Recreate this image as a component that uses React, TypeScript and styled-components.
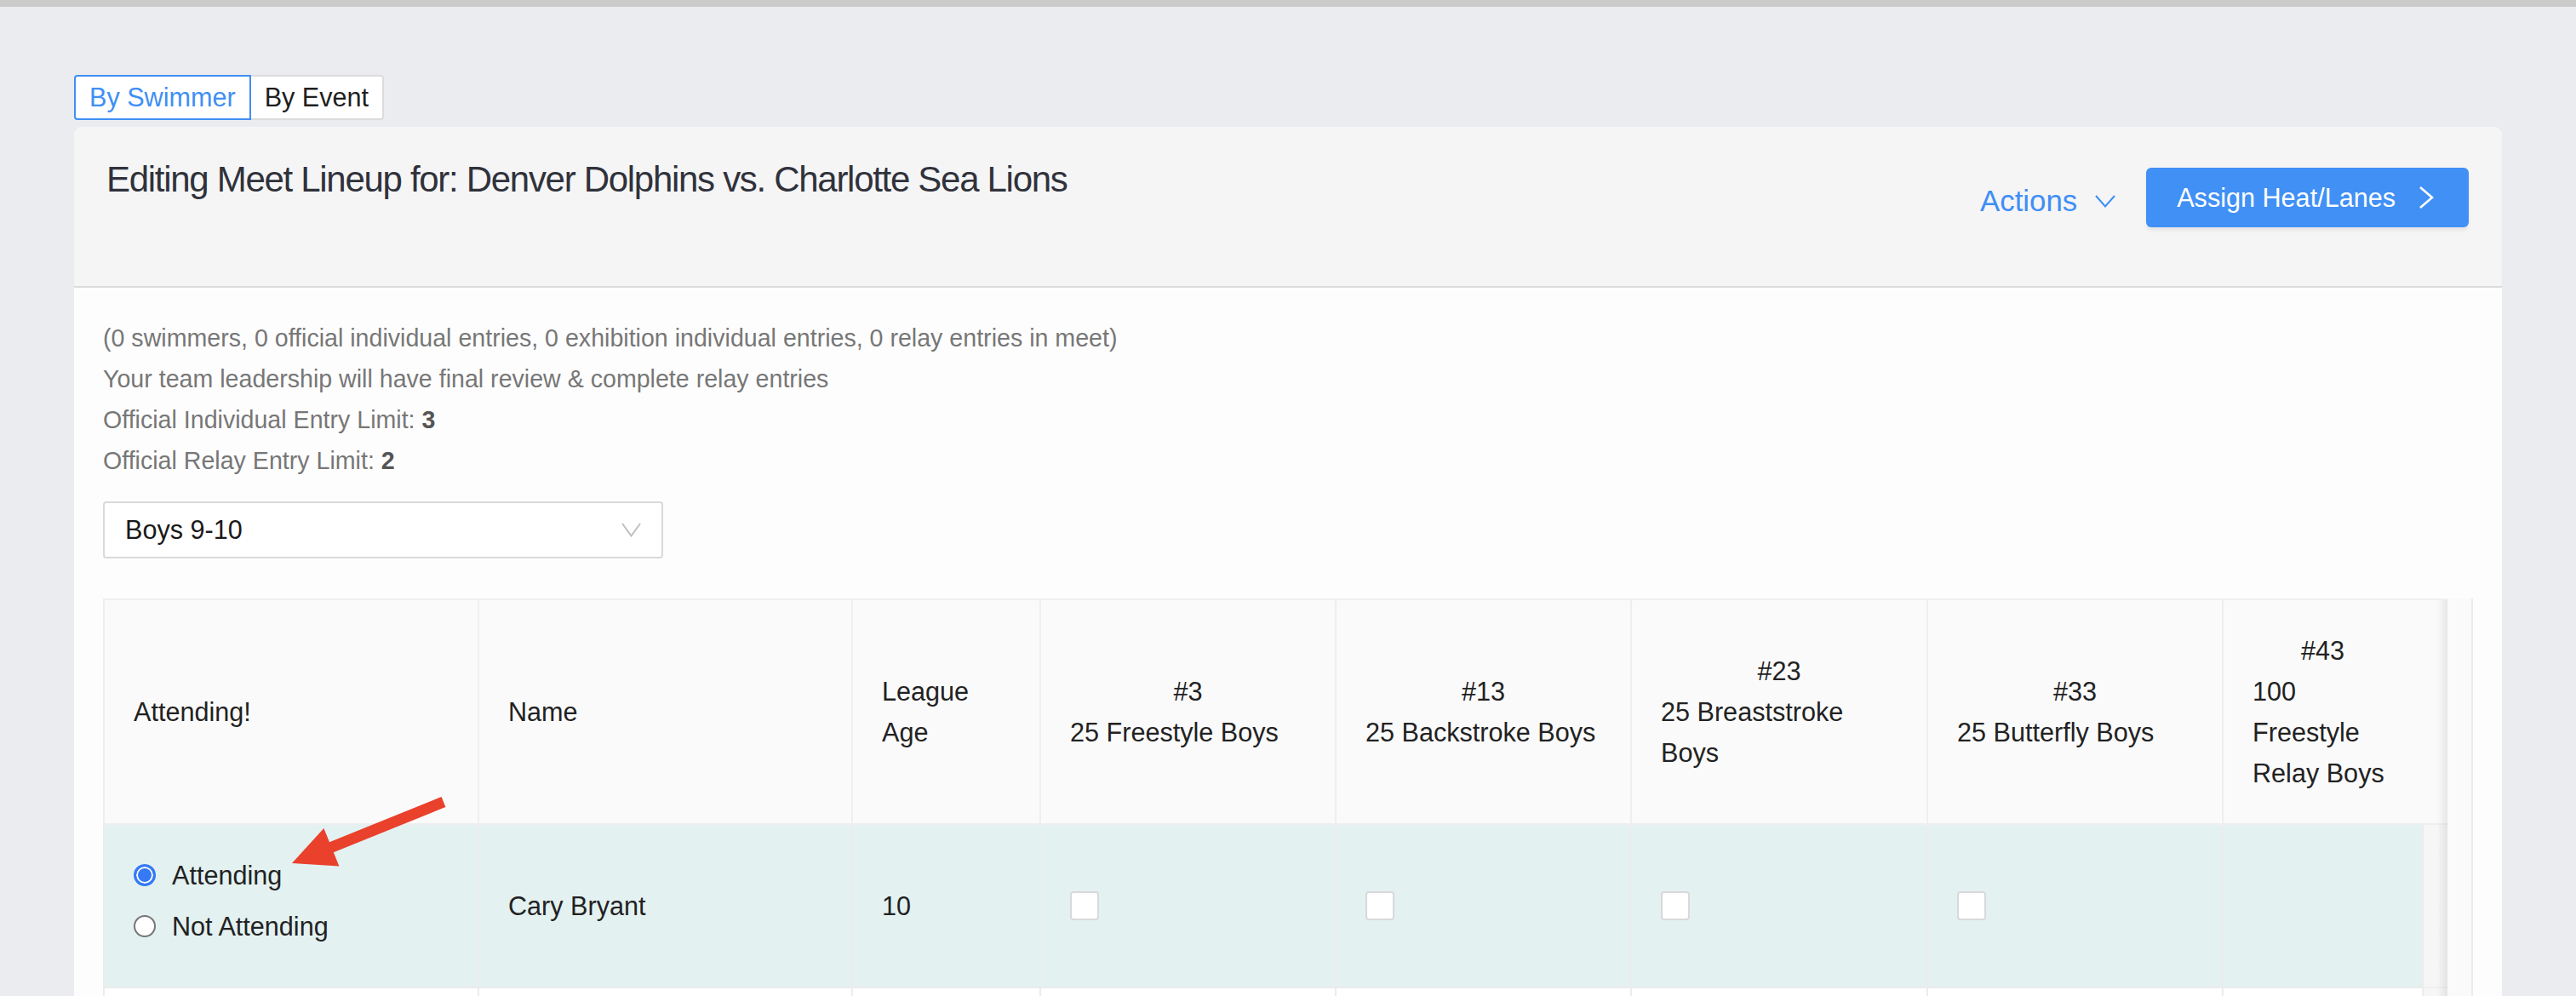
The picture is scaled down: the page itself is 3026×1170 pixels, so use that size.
import React from "react";
import styled, { createGlobalStyle } from "styled-components";

const GlobalStyle = createGlobalStyle`
  html, body {
    margin: 0;
    padding: 0;
    overflow: hidden;
    background: #ebecf0;
  }
  body {
    font-family: "Liberation Sans", Arial, Helvetica, sans-serif;
  }
  *, *::before, *::after {
    box-sizing: border-box;
  }
`;

const Root = styled.div`
  position: relative;
  width: 3026px;
  height: 1170px;
  overflow: hidden;
  background: #ebecf0;
`;

const TopBar = styled.div`
  height: 8px;
  background: #cbcbcb;
`;

const Page = styled.div`
  padding: 80px 87px 0;
`;

const Tabs = styled.div`
  display: flex;
  height: 53px;
`;

const Tab = styled.button<{ $active?: boolean }>`
  margin: 0;
  padding: 0 16px;
  height: 53px;
  font-family: inherit;
  font-size: 30.6px;
  line-height: 49px;
  background: #fff;
  cursor: pointer;
  color: ${(p) => (p.$active ? "#3f8ff5" : "#1f1f1f")};
  border: 2px solid ${(p) => (p.$active ? "#3f8ff5" : "#dcdcdc")};
  border-radius: ${(p) => (p.$active ? "4px 0 0 4px" : "0 4px 4px 0")};
  ${(p) => (p.$active ? "" : "border-left: none;")}
`;

const Card = styled.div`
  margin-top: 8px;
  border-radius: 10px 10px 0 0;
  background: #fdfdfd;
  overflow: hidden;
`;

const CardHeader = styled.div`
  height: 189px;
  background: #f5f5f6;
  border-bottom: 2px solid #dcdcdc;
  display: flex;
  justify-content: space-between;
  align-items: flex-start;
  padding: 32px 39px 0 38px;
`;

const Title = styled.h1`
  margin: 0;
  font-size: 42px;
  line-height: 60px;
  font-weight: 400;
  letter-spacing: -1.3px;
  color: #30323b;
`;

const HeaderActions = styled.div`
  margin-top: 16px;
  height: 70px;
  display: flex;
  align-items: center;
  gap: 36px;
`;

const ActionsLink = styled.span`
  display: flex;
  align-items: center;
  gap: 21px;
  margin-top: 8px;
  font-size: 34.8px;
  color: #3f8ef5;
  cursor: pointer;
`;

const PrimaryButton = styled.button`
  height: 70px;
  display: flex;
  align-items: center;
  gap: 27px;
  padding: 0 41px 0 36px;
  background: #4190f5;
  color: #fff;
  border: none;
  border-radius: 6px;
  font-family: inherit;
  font-size: 30.6px;
  box-shadow: 0 4px 4px rgba(0, 0, 0, 0.06);
  cursor: pointer;
`;

const CardBody = styled.div`
  padding: 35px 34px 0;
`;

const InfoLine = styled.div`
  font-size: 28.6px;
  line-height: 48px;
  color: #777;

  strong {
    color: #555;
    font-weight: 700;
  }
`;

const Select = styled.div`
  margin-top: 24px;
  width: 658px;
  height: 67px;
  border: 2px solid #d9d9d9;
  border-radius: 4px;
  background: #fff;
  display: flex;
  align-items: center;
  justify-content: space-between;
  padding: 0 24px;
  font-size: 30.6px;
  color: #1a1a1a;
`;

const TableFrame = styled.div`
  margin-top: 47px;
  display: flex;
  background: #fafafa;
  border-right: 2px solid #ececec;
  padding-right: 28px;
`;

const TableScroll = styled.div`
  position: relative;
  flex: 1;
  border-top: 2px solid #efefef;

  &::after {
    content: "";
    position: absolute;
    top: 0;
    right: 0;
    bottom: 0;
    width: 12px;
    background: linear-gradient(to right, rgba(0, 0, 0, 0), rgba(0, 0, 0, 0.08));
    pointer-events: none;
  }
`;

const Row = styled.div`
  display: grid;
  grid-template-columns: 440px 439px 221px 347px 347px 348px 347px 235px 30px;
`;

const HeaderCell = styled.div`
  background: #fafafa;
  border-left: 2px solid #efefef;
  border-bottom: 2px solid #efefef;
  padding: 35px 34px;
  font-size: 30.6px;
  line-height: 48px;
  color: #222;
  display: flex;
  flex-direction: column;
  justify-content: center;
`;

const EventNumber = styled.span`
  display: block;
  text-align: center;
`;

const Gutter = styled.div<{ $header?: boolean }>`
  background: ${(p) => (p.$header ? "#fafafa" : "#f6f6f6")};
  border-bottom: 2px solid #efefef;
  ${(p) => (p.$header ? "" : "border-left: 2px solid #ececec;")}
`;

const BodyCell = styled.div<{ $tint?: boolean }>`
  min-height: 192px;
  background: ${(p) => (p.$tint ? "#e3f1f1" : "#fff")};
  border-left: 2px solid #ececec;
  border-bottom: 2px solid #ececec;
  padding: 0 34px;
  display: flex;
  align-items: center;
  font-size: 30.6px;
  color: #222;
`;

const RadioGroup = styled.div`
  display: flex;
  flex-direction: column;
  gap: 8px;
  padding-bottom: 12px;
`;

const RadioItem = styled.label`
  display: flex;
  align-items: center;
  gap: 19px;
  height: 52px;
  font-size: 30.6px;
  color: #222;
`;

const RadioDot = styled.span<{ $checked?: boolean }>`
  width: 26px;
  height: 26px;
  border-radius: 50%;
  flex: none;
  ${(p) =>
    p.$checked
      ? "border: 3px solid #3579f6; background: #3579f6; box-shadow: inset 0 0 0 2px #fff;"
      : "border: 2px solid #767676; background: #fff;"}
`;

const CheckBox = styled.span`
  width: 34px;
  height: 34px;
  border: 2px solid #d9d9d9;
  border-radius: 4px;
  background: #fff;
`;

const ArrowOverlay = styled.svg`
  position: absolute;
  top: 0;
  left: 0;
  pointer-events: none;
`;

const ChevronDown = ({ color, w, h, sw }: { color: string; w: number; h: number; sw: number }) => (
  <svg width={w} height={h} viewBox={`0 0 ${w} ${h}`} fill="none">
    <path d={`M1 1 L${w / 2} ${h - 1.5} L${w - 1} 1`} stroke={color} strokeWidth={sw} />
  </svg>
);

const ChevronRight = () => (
  <svg width="18" height="28" viewBox="0 0 18 28" fill="none">
    <path d="M2 2 L16 14 L2 26" stroke="#fff" strokeWidth="2.6" />
  </svg>
);

const events = [
  { num: "#3", name: "25 Freestyle Boys" },
  { num: "#13", name: "25 Backstroke Boys" },
  { num: "#23", name: "25 Breaststroke Boys" },
  { num: "#33", name: "25 Butterfly Boys" },
  { num: "#43", name: "100 Freestyle Relay Boys" },
];

export default function App() {
  return (
    <Root>
      <GlobalStyle />
      <TopBar />
      <Page>
        <Tabs>
          <Tab $active>By Swimmer</Tab>
          <Tab>By Event</Tab>
        </Tabs>
        <Card>
          <CardHeader>
            <Title>Editing Meet Lineup for: Denver Dolphins vs. Charlotte Sea Lions</Title>
            <HeaderActions>
              <ActionsLink>
                Actions
                <ChevronDown color="#3f8ef5" w={24} h={15} sw={2} />
              </ActionsLink>
              <PrimaryButton>
                Assign Heat/Lanes
                <ChevronRight />
              </PrimaryButton>
            </HeaderActions>
          </CardHeader>
          <CardBody>
            <InfoLine>
              (0 swimmers, 0 official individual entries, 0 exhibition individual entries, 0 relay entries in meet)
            </InfoLine>
            <InfoLine>Your team leadership will have final review &amp; complete relay entries</InfoLine>
            <InfoLine>
              Official Individual Entry Limit: <strong>3</strong>
            </InfoLine>
            <InfoLine>
              Official Relay Entry Limit: <strong>2</strong>
            </InfoLine>
            <Select>
              <span>Boys 9-10</span>
              <ChevronDown color="#bfbfbf" w={23} h={17} sw={2} />
            </Select>
            <TableFrame>
              <TableScroll>
                <Row>
                  <HeaderCell>Attending!</HeaderCell>
                  <HeaderCell>Name</HeaderCell>
                  <HeaderCell>League Age</HeaderCell>
                  {events.map((e) => (
                    <HeaderCell key={e.num}>
                      <EventNumber>{e.num}</EventNumber>
                      {e.name}
                    </HeaderCell>
                  ))}
                  <Gutter $header />
                </Row>
                <Row>
                  <BodyCell $tint>
                    <RadioGroup>
                      <RadioItem>
                        <RadioDot $checked />
                        Attending
                      </RadioItem>
                      <RadioItem>
                        <RadioDot />
                        Not Attending
                      </RadioItem>
                    </RadioGroup>
                  </BodyCell>
                  <BodyCell $tint>Cary Bryant</BodyCell>
                  <BodyCell $tint>10</BodyCell>
                  <BodyCell $tint>
                    <CheckBox />
                  </BodyCell>
                  <BodyCell $tint>
                    <CheckBox />
                  </BodyCell>
                  <BodyCell $tint>
                    <CheckBox />
                  </BodyCell>
                  <BodyCell $tint>
                    <CheckBox />
                  </BodyCell>
                  <BodyCell $tint />
                  <Gutter />
                </Row>
                <Row>
                  <BodyCell />
                  <BodyCell />
                  <BodyCell />
                  <BodyCell />
                  <BodyCell />
                  <BodyCell />
                  <BodyCell />
                  <BodyCell />
                  <Gutter />
                </Row>
              </TableScroll>
            </TableFrame>
          </CardBody>
        </Card>
      </Page>
      <ArrowOverlay width="3026" height="1170" viewBox="0 0 3026 1170">
        <polygon
          points="518.6,936 523.4,948 391.8,1001.3 398.4,1017.5 343,1014 380.4,973.1 387,989.3"
          fill="#e9412b"
        />
      </ArrowOverlay>
    </Root>
  );
}
